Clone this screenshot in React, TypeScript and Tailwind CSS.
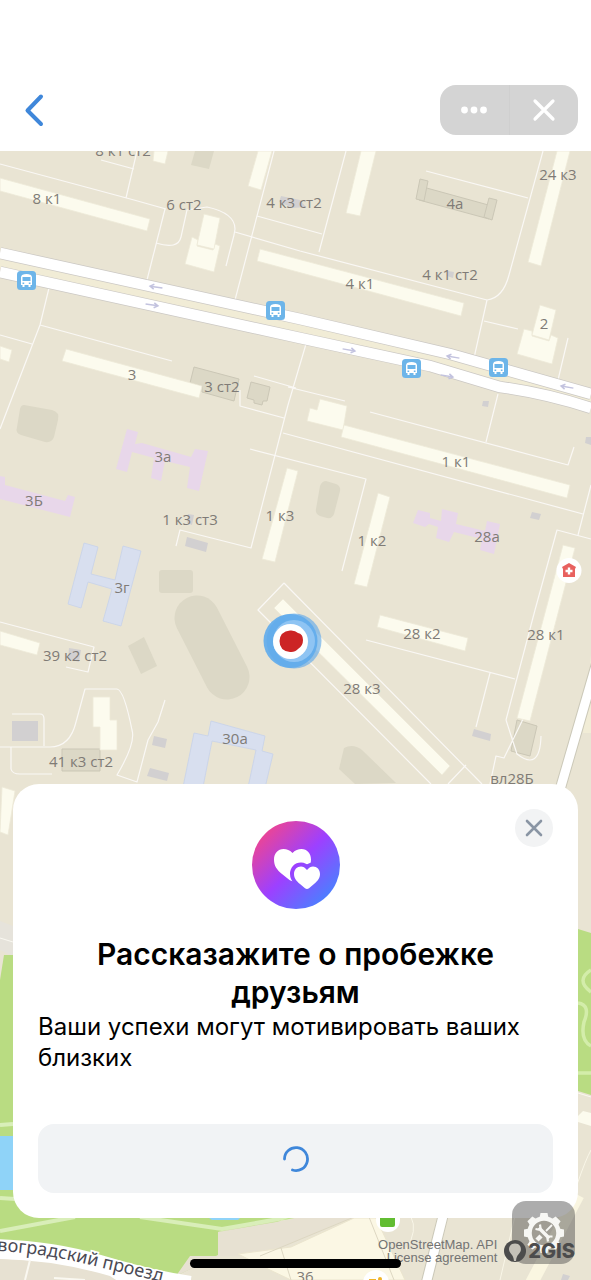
type Label = { text: string; x: number; y: number };

const labels: Label[] = [
  { text: "8 к1 ст2", x: 123, y: 156 },
  { text: "8 к1", x: 47, y: 204 },
  { text: "6 ст2", x: 184, y: 210 },
  { text: "4 к3 ст2", x: 294, y: 208 },
  { text: "4а", x: 455, y: 209 },
  { text: "24 к3", x: 558, y: 180 },
  { text: "4 к1", x: 360, y: 289 },
  { text: "4 к1 ст2", x: 450, y: 280 },
  { text: "2", x: 544, y: 329 },
  { text: "3", x: 132, y: 380 },
  { text: "3 ст2", x: 222, y: 392 },
  { text: "3а", x: 163, y: 462 },
  { text: "3Б", x: 34, y: 506 },
  { text: "1 к3 ст3", x: 190, y: 525 },
  { text: "1 к3", x: 280, y: 521 },
  { text: "3г", x: 122, y: 593 },
  { text: "1 к1", x: 456, y: 467 },
  { text: "1 к2", x: 372, y: 546 },
  { text: "28а", x: 487, y: 542 },
  { text: "39 к2 ст2", x: 75, y: 661 },
  { text: "28 к2", x: 422, y: 639 },
  { text: "28 к1", x: 546, y: 640 },
  { text: "28 к3", x: 362, y: 694 },
  { text: "30а", x: 235, y: 744 },
  { text: "41 к3 ст2", x: 81, y: 767 },
  { text: "вл28Б", x: 512, y: 784 },
  { text: "36", x: 305, y: 1282 },
];

const houses = [
  "M0 178L150 219L147 231L0 191Z",
  "M154 151L168 151L165 164L153 161Z",
  "M258 151L272 151L261 190L248 186Z",
  "M192 237L198 240L197 246L213 250L215 244L220 246L214 272L185 264Z",
  "M204 214L220 218L214 249L197 245Z",
  "M260 249L464 303L461 316L257 261Z",
  "M361 151L376 151L360 216L346 213Z",
  "M557 151L570 151L541 266L528 262Z",
  "M524 329L532 331L532 336L549 341L551 335L558 338L552 364L517 354Z",
  "M540 305L556 310L549 340L532 335Z",
  "M0 346L12 350L9 362L0 359Z",
  "M66 349L202 386L199 398L62 361Z",
  "M320 399L347 406L343 430L307 421L310 408L317 410Z",
  "M344 425L570 485L567 498L341 437Z",
  "M287 468L298 471L275 562L262 559Z",
  "M378 493L390 497L367 587L354 584Z",
  "M563 545L575 548L530 721L517 718Z",
  "M380 615L468 638L465 651L377 627Z",
  "M283 599L450 766L442 775L274 608Z",
  "M0 631L40 643L37 655L0 645Z",
  "M93 697L110 697L110 720L117 720L117 750L100 750L100 727L93 727Z",
  "M2 787L15 791L8 835L0 832Z",
];

const lots = [
  "M195 151L214 151L209 169L191 165Z",
  "M24 405L52 410Q60 412 58 420L54 437Q52 443 45 442L21 435Q15 433 17 427L20 409Q21 405 24 405Z",
  "M326 481L336 484Q341 486 340 491L334 514Q332 519 327 518L320 516Q315 514 316 509L320 486Q322 481 326 481Z",
  "M162 570H190Q193 570 193 573V590Q193 593 190 593H162Q159 593 159 590V573Q159 570 162 570Z",
  "M128 646L144 637L157 666L141 674Z",
  "M344 748Q353 743 362 750L396 783L355 784L339 769Z",
];

const yards = [
  "M0 164L134 200L166 209",
  "M137 151L126 198M101 160L134 169",
  "M165 209L147 280",
  "M156 243Q178 250 181 237L187 210L207 207Q235 213 235 229L234 235L226 266",
  "M274 151L235 300M257 216L322 234M235 232L300 251L487 300Q503 298 509 275L543 151",
  "M346 151L319 252M426 171L528 198",
  "M487 300L474 358M484 321L518 329M568 338L558 380",
  "M49 288L40 325L0 429M0 335L32 344M40 325L172 361",
  "M306 344L288 405L251 548L180 530L176 546M254 376L296 388M240 390L240 406L284 418M283 433L583 514M288 387L345 401",
  "M250 449L366 479L342 571",
  "M370 412L568 465L574 447M498 394L486 442",
  "M591 485L578 535M591 539L557 530L535 610L506 720",
  "M366 640L515 679M490 673L476 727M506 720L517 754Q540 772 541 736M525 715L504 758L496 756L490 784",
  "M284 583L258 610L431 784M284 583L482 784M448 784L466 765",
  "M0 622L94 647L88 672L66 667",
  "M0 747H50Q70 747 76 722L85 689H117Q124 690 132 730Q136 743 117 775L137 782L148 740L158 722L165 700",
  "M12 714H40Q44 714 44 719V746M11 747V769Q12 774 20 774H52",
];

const busStops = [
  { x: 17, y: 271 },
  { x: 266, y: 301 },
  { x: 402, y: 359 },
  { x: 489, y: 358 },
];

const arrows = [
  { x: 156, y: 287, turn: 188 },
  { x: 152, y: 305, turn: 8 },
  { x: 349, y: 350, turn: 10 },
  { x: 453, y: 357, turn: 190 },
  { x: 447, y: 376, turn: 10 },
  { x: 567, y: 387, turn: 190 },
];

function CityMap() {
  return (
    <svg
      className="absolute inset-0 h-full w-full"
      viewBox="0 151 591 1129"
      preserveAspectRatio="xMidYMin slice"
      role="img"
      aria-label="Карта"
    >
      <rect y="151" width="591" height="1129" fill="#e9e4d3" />

      <g fill="#dcd8c6">
        {lots.map((d) => (
          <path key={d} d={d} />
        ))}
        <path d="M197 618L227 677" stroke="#dcd8c6" strokeWidth="45" strokeLinecap="round" />
        <g stroke="#cbc7b6" strokeWidth="1">
          <path d="M423 187L492 206L489 219L419 200Z" />
          <path d="M420 179L428 181L424 201L416 199Z" />
          <path d="M489 198L497 200L492 220L484 217Z" />
          <path d="M194 367L239 379L234 401L202 392L202 386L190 383Z" />
          <path d="M251 382L270 387L267 401L263 401L262 405L254 403L254 400L247 398Z" />
          <path d="M517 720L537 726L530 756L511 751Z" />
          <path d="M62 749H100V771H62Z" />
        </g>
      </g>
      <g fill="#d2d0d1">
        <path d="M12 721H38V741H12Z" />
        <path d="M187 537L208 543L206 552L185 546Z" />
        <path d="M154 736L167 739L165 748L152 745Z" />
        <path d="M150 768L169 773L167 781L147 776Z" />
        <path d="M474 729L491 734L490 741L472 736Z" />
        <path d="M532 512L541 514L539 520L530 518Z" />
        <path d="M483 401L489 401L488 407L482 406Z" />
        <path d="M586 437L591 437V445L585 443Z" />
        <path d="M281 196L300 200L306 207L293 208L279 202Z" />
        <path d="M69 648L81 650L79 662L68 659Z" />
        <path d="M188 514L194 515L192 525L187 523Z" />
        <path d="M448 271L454 272L453 278L447 276Z" />
      </g>

      <g fill="none" stroke="#faf8f5" strokeWidth="1.2" strokeLinejoin="round">
        {yards.map((d) => (
          <path key={d} d={d} />
        ))}
      </g>

      <g fill="#fcfbee" stroke="#eeead8" strokeWidth="0.8">
        {houses.map((d) => (
          <path key={d} d={d} />
        ))}
      </g>

      <g fill="#e8d7ea">
        <path d="M127 429L138 432L135 444L142 443L191 457L195 449L208 451L199 491L187 488L190 467L165 461L161 481L151 478L154 458L132 452L127 472L116 469Z" />
        <path d="M0 476L5 477L5 485L65 501L68 495L75 497L70 517L0 499Z" />
        <path d="M418 510L430 513L430 518L441 521L442 509L458 513L456 524L485 531L487 521L500 524L494 554L480 550L482 539L454 532L449 542L436 538L438 527L429 524L425 527L413 523Z" />
      </g>
      <g fill="#d8dfef" stroke="#c7d2ea" strokeWidth="0.8">
        <path d="M84 543L98 547L91 574L115 580L123 546L141 551L121 626L103 621L112 589L88 582L81 608L68 604Z" />
        <path d="M211 721L265 736L262 751L273 754L264 792H247L256 750L212 741L202 792H182L194 733L208 736Z" />
      </g>

      <path d="M0 257L300 323L470 364L591 399V402L510 390L300 334L0 268Z" fill="#f1ecd6" />
      <g fill="none">
        <path d="M0 253L300 319L450 354L591 394" stroke="#cbc8c4" strokeWidth="12" />
        <path d="M0 272L300 338L430 366L500 387Q545 393 591 408" stroke="#cbc8c4" strokeWidth="12" />
        <path d="M0 253L300 319L450 354L591 394" stroke="#fff" strokeWidth="10.5" />
        <path d="M0 272L300 338L430 366L500 387Q545 393 591 408" stroke="#fff" strokeWidth="10.5" />
      </g>
      <path d="M591 655L583 733H591Z" fill="#f1ecd6" />
      <path d="M599 655L557 800" stroke="#cbc8b8" strokeWidth="11" />
      <path d="M599 655L557 800" stroke="#fff" strokeWidth="9" />

      {arrows.map((a) => (
        <path
          key={`${a.x}-${a.y}`}
          d="M-6.500 0H6M2 -2.500L6 0L2 2.500"
          transform={`translate(${a.x} ${a.y}) rotate(${a.turn})`}
          fill="none"
          stroke="#c3c3df"
          strokeWidth="1.5"
        />
      ))}

      {busStops.map((b) => (
        <g key={b.x} transform={`translate(${b.x} ${b.y})`}>
          <rect width="19" height="19" rx="3.500" fill="#6db5e9" />
          <path
            fillRule="evenodd"
            d="M5 4Q9.500 2 14 4L15 6V14H13.500V16H11.500V14H7.500V16H5.500V14H4V6ZM5.500 6V10H13.500V6ZM5.500 11.500V13H7.200V11.500ZM11.800 11.500V13H13.500V11.500Z"
            fill="#fff"
          />
        </g>
      ))}

      <circle cx="569" cy="570.500" r="12.500" fill="#fff" />
      <path d="M569 563L576 567L575 569V577H563V569L562 567Z" fill="#e8615f" />
      <path d="M569 567.500V574.500M565.500 571H572.500" stroke="#fff" strokeWidth="2.400" />

      <path d="M0 921L13 926V956L0 950Z" fill="#e6e3db" />
      <path d="M0 938L13 942" stroke="#faf8f1" />
      <path d="M4 955H13V1137H0V980Z" fill="#b9dc82" />
      <path d="M0 1125L13 1124" stroke="#d9efb9" strokeWidth="4" />
      <path d="M0 1136H14V1190H0Z" fill="#8fd3f8" />
      <path d="M0 1190H14L60 1215H290L218 1232V1255L178 1275L0 1250Z" fill="#b9dc82" />
      <path d="M0 1198L15 1199M0 1231L75 1217M140 1217L222 1229L290 1217" stroke="#d9eeb9" strokeWidth="4" fill="none" />
      <path d="M206 1216H242L238 1220H212Z" fill="#8fd3f8" />

      <path d="M578 929L591 933V1095L578 1091Z" fill="#b9dc82" />
      <path d="M591 970Q575 980 591 992M578 1003Q591 1005 584 1022Q580 1040 591 1046M578 1073H591" stroke="#d3edaa" strokeWidth="3.500" fill="none" />
      <path d="M578 1093L591 1097" stroke="#faf8f1" />
      <path d="M578 1116L583 1111L591 1113V1126L578 1122Z" fill="#fcfbee" />

      <path d="M218 1232L300 1217H291L218 1244Z" fill="#c3e38f" />
      <path d="M218 1232L300 1218H350L260 1256H190L176 1276L218 1256Z" fill="#e7e1d2" />
      <path d="M238 1254L291 1247L354 1218H376L405 1280H291L270 1270Z" fill="#fbf7e4" stroke="#ebe5ce" />
      <path d="M354 1217L260 1256M369 1217L394 1280M281 1248L291 1280" stroke="#ddd7c2" fill="none" />
      <path d="M443 1216L426 1284" stroke="#cbc8b8" strokeWidth="11" />
      <path d="M443 1216L426 1284" stroke="#fff" strokeWidth="9" />
      <path d="M411 1217Q418 1230 406 1250M591 1150Q580 1170 560 1240M515 1216L500 1280" stroke="#f9f6e8" fill="none" />
      <path d="M578 1195L531 1284" stroke="#faf6e1" strokeWidth="13" />
      <path d="M563 1274L570 1276L568 1280H561Z" fill="#d2d0d1" />

      <path d="M-8 1249Q50 1250 100 1265T190 1286" fill="none" stroke="#fff" strokeWidth="20" />
      <path d="M0 1259Q55 1260 110 1276L116 1280H0Z" fill="#e7e1d2" />
      <path d="M30 1260L25 1280M54 1278L85 1280" stroke="#faf8f1" strokeWidth="2" />
      <path id="street-text" d="M-3 1251Q40 1253 82 1263T200 1291" fill="none" />
      <text fontSize="18" fill="#4b4a55" stroke="#fff" strokeWidth="3" paintOrder="stroke" className="font-['Noto_Sans',sans-serif]">
        <textPath href="#street-text">воградский проезд</textPath>
      </text>

      <circle cx="388" cy="1220" r="12" fill="#fff" />
      <rect x="380" y="1213" width="15" height="14" rx="2" fill="#62bd32" />
      <circle cx="376" cy="1283" r="13" fill="#fff" />
      <circle cx="380" cy="1279" r="2" fill="#f0b429" />
      <path d="M369 1279H376V1282H369Z" fill="#f0b429" />

      <circle cx="294" cy="641" r="27.500" fill="#62a9e9" opacity="0.65" />
      <circle cx="290.500" cy="641" r="27" fill="#5fabec" opacity="0.9" />
      <circle cx="294" cy="641" r="21" fill="#8fc4f3" />
      <circle cx="290.500" cy="641.500" r="17.500" fill="#fff" />
      <path d="M290 630.500Q295 630 298 633Q303 634 303 640Q303 646 298 649Q295 652.500 290 652Q279.500 651 279.500 641Q280 631.500 290 630.500Z" fill="#cc2425" />

      <g fontSize="15" fill="#7f7b76" textAnchor="middle" className="font-['Open_Sans','Noto_Sans',sans-serif]">
        {labels.map((l) => (
          <text key={l.text} x={l.x} y={l.y}>
            {l.text}
          </text>
        ))}
      </g>
    </svg>
  );
}

function HeartsIcon() {
  const small =
    "M55 49C53 46.500 51 45.500 49 45.500C45 45.500 42 48.500 42 53C42 57.500 44.500 60 48 63L53 67.200C54.300 68.200 55.700 68.200 57 67.200L62 63C65.500 60 68 57.500 68 53C68 48.500 65 45.500 61 45.500C59 45.500 57 46.500 55 49Z";
  return (
    <svg className="h-[88px] w-[88px]" viewBox="0 0 88 88" aria-hidden="true">
      <defs>
        <linearGradient id="disc" x1="0.100" y1="0.120" x2="0.880" y2="0.900">
          <stop offset="0" stopColor="#f0458f" />
          <stop offset="0.500" stopColor="#9d40ff" />
          <stop offset="1" stopColor="#4683ff" />
        </linearGradient>
        <mask id="gap">
          <rect width="88" height="88" fill="#fff" />
          <path d={small} fill="#000" stroke="#000" strokeWidth="8" />
        </mask>
      </defs>
      <circle cx="44" cy="44" r="44" fill="url(#disc)" />
      <path
        mask="url(#gap)"
        fill="#fff"
        d="M40.500 32C37.500 29 35 28 31.500 28C26 28 22 32.500 22 38.500C22 45 25 49 30 53L37.500 59C39.500 60.500 41.500 60.500 43.500 59L51 53C56 49 59 45 59 38.500C59 32.500 55 28 49.500 28C46 28 43.500 29 40.500 32Z"
      />
      <path d={small} fill="#fff" />
    </svg>
  );
}

function GearIcon() {
  const teeth = [0, 45, 90, 135, 180, 225, 270, 315];
  return (
    <svg className="h-11 w-11" viewBox="0 0 44 44" aria-hidden="true">
      <g fill="#f7f7f4">
        {teeth.map((t) => (
          <path key={t} d="M17.500 7L18.500 2H25.500L26.500 7Z" transform={`rotate(${t} 22 22)`} />
        ))}
      </g>
      <circle cx="22" cy="22" r="14.500" fill="none" stroke="#f7f7f4" strokeWidth="4.500" />
      <g stroke="#f7f7f4" fill="none">
        <path d="M17 17L27 27" strokeWidth="3.600" />
        <path d="M18 13.500L18.500 17L16.500 18.500L13.500 18M30.500 25.500L27.500 25.500L25.500 27.500L26 30.500" strokeWidth="2.200" />
        <path d="M30 14L24 20" strokeWidth="1.800" />
        <path d="M19 25L15 29" strokeWidth="4.500" />
      </g>
    </svg>
  );
}

export default function App() {
  return (
    <main className="flex min-h-screen flex-col bg-white font-[Inter,'Liberation_Sans',sans-serif] text-black">
      <header className="flex items-center justify-between px-[13px] pt-[85px] pb-4">
        <button type="button" aria-label="Назад" className="flex h-[50px] w-11 items-center justify-center">
          <svg className="h-9 w-6" viewBox="0 0 24 36" fill="none" stroke="#3f87da" strokeWidth="4" strokeLinecap="round" strokeLinejoin="round">
            <path d="M18 4.500L4.500 18.500L18 32" />
          </svg>
        </button>
        <div className="flex h-[50px] w-[138px] overflow-hidden rounded-2xl bg-[#d4d4d4]">
          <button type="button" aria-label="Меню" className="flex flex-1 items-center justify-center border-r border-[#cfcfcf]">
            <svg className="h-2 w-7" viewBox="0 0 28 8" fill="#fff">
              <circle cx="4.500" cy="4" r="3.400" />
              <circle cx="14" cy="4" r="3.400" />
              <circle cx="23.500" cy="4" r="3.400" />
            </svg>
          </button>
          <button type="button" aria-label="Закрыть приложение" className="flex flex-1 items-center justify-center">
            <svg className="h-6 w-6" viewBox="0 0 24 24" stroke="#fff" strokeWidth="3.200" strokeLinecap="round">
              <path d="M3 3L21 21M21 3L3 21" />
            </svg>
          </button>
        </div>
      </header>

      <section className="relative flex flex-1 flex-col justify-end overflow-hidden px-[13px] pb-[62px]">
        <CityMap />

        <div role="dialog" aria-labelledby="share-title" className="relative flex flex-col items-center rounded-[26px] bg-white px-[25px] pt-[37px] pb-[25px]">
          <button
            type="button"
            aria-label="Закрыть"
            className="absolute top-[25px] right-[25px] flex h-[38px] w-[38px] items-center justify-center rounded-full bg-[#f2f3f4]"
          >
            <svg className="h-5 w-5" viewBox="0 0 20 20" stroke="#8a95a4" strokeWidth="2.600" strokeLinecap="round">
              <path d="M3 3L17 17M17 3L3 17" />
            </svg>
          </button>
          <HeartsIcon />
          <h1 id="share-title" className="mt-[26px] px-8 text-center text-[30px] leading-[38px] font-semibold">
            Рассказажите о пробежке друзьям
          </h1>
          <p className="w-full text-[24px] leading-[31px]">Ваши успехи могут мотивировать ваших близких</p>
          <button type="button" disabled aria-label="Загрузка" className="mt-[51px] flex h-[69px] w-full items-center justify-center rounded-2xl bg-[#f1f3f5]">
            <svg className="h-7 w-7" viewBox="0 0 28 28" fill="none" stroke="#3f87da" strokeWidth="2.800" strokeLinecap="round">
              <path d="M2.500 14A11.500 11.500 0 1 1 10.500 25" />
            </svg>
          </button>
        </div>

        <button
          type="button"
          aria-label="Инструменты"
          className="absolute right-4 bottom-4 flex h-[63px] w-[63px] items-center justify-center rounded-[14px] bg-[#484848]/45"
        >
          <GearIcon />
        </button>

        <div className="absolute right-4 bottom-4 flex items-center gap-[6px] text-[#737373]">
          <p className="text-right font-['Liberation_Sans',sans-serif] text-[13px] leading-[13px]">
            OpenStreetMap. API
            <br />
            <a href="#license">License agreement</a>
          </p>
          <div className="flex items-center gap-px text-[#4c4c4c]">
            <svg className="h-6 w-6" viewBox="0 0 24 24" aria-hidden="true">
              <circle cx="12" cy="12" r="11" fill="currentColor" />
              <path d="M12 4.500C16.500 4.500 18.500 8 17.800 11.500C17.200 14.500 13.500 15.500 13 22H11C10.500 15.500 6.800 14.500 6.200 11.500C5.500 8 7.500 4.500 12 4.500Z" fill="#c4c1b8" />
            </svg>
            <span className="text-[20px] leading-6 font-extrabold">2GIS</span>
          </div>
        </div>

        <div className="absolute inset-x-0 bottom-3 flex justify-center">
          <div className="h-[9px] w-[211px] rounded-full bg-black" />
        </div>
      </section>
    </main>
  );
}
